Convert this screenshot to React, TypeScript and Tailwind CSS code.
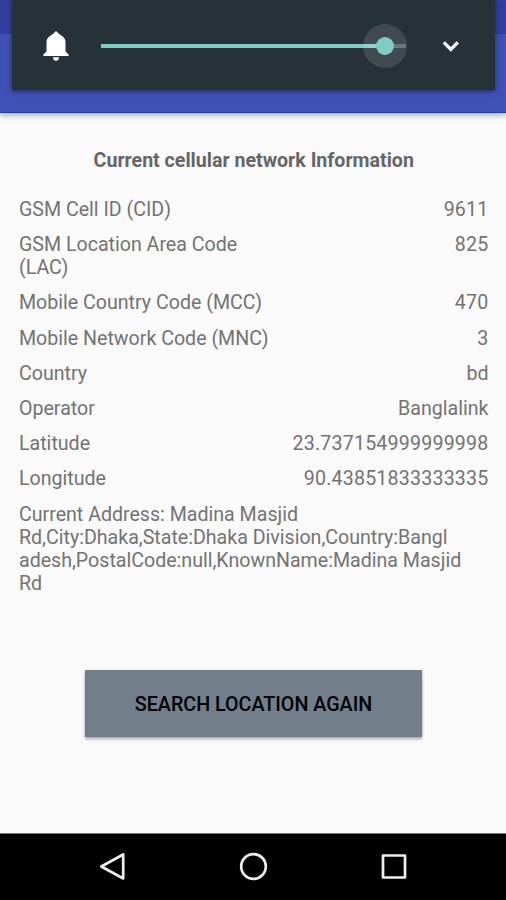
import React from "react";

const cellInfo = [
  { label: "GSM Cell ID (CID)", value: "9611" },
  { label: "GSM Location Area Code (LAC)", value: "825" },
  { label: "Mobile Country Code (MCC)", value: "470" },
  { label: "Mobile Network Code (MNC)", value: "3" },
  { label: "Country", value: "bd" },
  { label: "Operator", value: "Banglalink" },
  { label: "Latitude", value: "23.737154999999998" },
  { label: "Longitude", value: "90.43851833333335" },
];

const addressLines = [
  "Current Address: Madina Masjid",
  "Rd,City:Dhaka,State:Dhaka Division,Country:Bangl",
  "adesh,PostalCode:null,KnownName:Madina Masjid",
  "Rd",
];

const VolumePanel = () => {
  return (
    <div className="absolute top-0 left-3 w-[483px] h-[90px] bg-[#263238] shadow-[0_1px_5px_rgba(0,0,0,0.5)] flex items-center pt-px pl-[31px] pr-[35px]">
      <svg viewBox="0 0 26 32" className="w-[26px] h-8 shrink-0" fill="#fff">
        <path d="M13 1C11.500 2.500 9.500 4.500 7 6 4.500 7.600 3.500 9.800 3.500 12.500v9L0.400 24.600v1.500h25.200v-1.500l-3.100-3.100v-9c0-2.700-1-4.900-3.500-6.500C16.500 4.500 14.500 2.500 13 1z" />
        <path d="M10 27.200h6c0 2-1.200 3.500-3 3.500s-3-1.500-3-3.500z" />
      </svg>

      {/* Slider */}
      <div className="relative ml-8 w-[305px] h-[46px] flex items-center">
        <div className="w-full h-1 bg-[#5c676c]">
          <div className="w-[284px] h-full bg-[#80cbc4]"></div>
        </div>
        <div className="absolute left-[262px] top-[1px] w-11 h-11 rounded-full bg-white/12 flex items-center justify-center">
          <div className="w-[18px] h-[18px] rounded-full bg-[#80cbc4]"></div>
        </div>
      </div>

      <svg viewBox="0 0 18 12" className="ml-auto w-[18px] h-3 shrink-0" fill="none" stroke="#fff" strokeWidth="3.300">
        <path d="M1.800 2.300l7 7 7-7" />
      </svg>
    </div>
  );
};

const NavigationBar = () => {
  return (
    <div className="h-[67px] shrink-0 bg-black border-t border-[#777] flex items-center justify-between pl-[99px] pr-[98px]">
      <svg viewBox="0 0 28 30" className="w-7 h-[30px]" fill="none" stroke="#eee" strokeWidth="2.700" strokeLinejoin="round">
        <path d="M2.300 14.500L24.200 2.500v24z" />
      </svg>
      <svg viewBox="0 0 30 30" className="w-[30px] h-[30px]" fill="none" stroke="#eee" strokeWidth="2.700">
        <circle cx="14.500" cy="14.500" r="12.300" />
      </svg>
      <svg viewBox="0 0 28 28" className="w-7 h-7" fill="none" stroke="#eee" strokeWidth="2.700" strokeLinejoin="round">
        <rect x="3" y="2.500" width="22" height="22" />
      </svg>
    </div>
  );
};

export default function App() {
  return (
    <div className="relative w-full h-[900px] flex flex-col bg-[#fafafa] font-[Roboto,sans-serif] text-[19.6px] leading-[23.2px] text-[#737373] overflow-hidden">
      <header className="h-[113px] shrink-0 bg-[#3f51b5] border-b border-[#1f3da8] shadow-[0_2px_6px_rgba(0,0,0,0.35)]">
        <div className="h-[34px] bg-[#303f9f]"></div>
      </header>
      <VolumePanel />

      <main className="flex-1 flex flex-col pl-[19px] pr-[17.500px] pt-[35.500px]">
        <h1 className="text-center font-bold text-[#666]">Current cellular network Information</h1>

        <div className="mt-[26px] flex flex-col gap-3">
          {cellInfo.map((item) => (
            <div key={item.label} className="flex justify-between">
              <span className="max-w-[260px]">{item.label}</span>
              <span className={/^\d/.test(item.value) ? "tracking-[0.2px]" : ""}>{item.value}</span>
            </div>
          ))}
          <p>
            {addressLines.map((line, index) => (
              <span key={index} className="block whitespace-nowrap">{line}</span>
            ))}
          </p>
        </div>

        <button className="mt-[74.700px] ml-[66px] w-[337px] h-[67px] pt-[3px] bg-[#727e8a] text-black font-medium text-[19.7px] shadow-[0_2px_3px_rgba(0,0,0,0.35)]">
          SEARCH LOCATION AGAIN
        </button>
      </main>

      <NavigationBar />
    </div>
  );
}
